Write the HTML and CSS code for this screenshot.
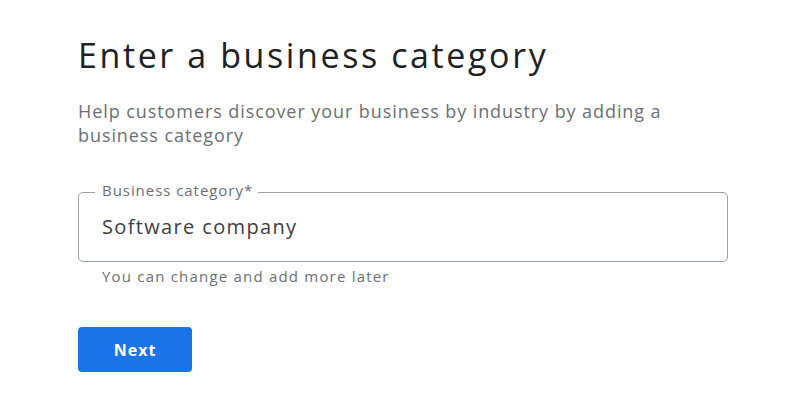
FILE: index.html
```html
<!DOCTYPE html>
<html lang="en">
<head>
<meta charset="utf-8">
<title>Enter a business category</title>
<link rel="stylesheet" href="styles.css">
</head>
<body>
<main class="page">
  <h1 class="title">Enter a business category</h1>
  <p class="intro">Help customers discover your business by industry by adding a business category</p>
  <fieldset class="field">
    <legend class="field-label">Business category*</legend>
    <div class="field-value">Software company</div>
  </fieldset>
  <p class="helper">You can change and add more later</p>
  <button class="btn-next" type="button">Next</button>
</main>
</body>
</html>
```
FILE: styles.css
```css
html, body {
  margin: 0;
  padding: 0;
  background: #ffffff;
}

body {
  font-family: "Open Sans", Roboto, "Liberation Sans", sans-serif;
  color: #202124;
}

.page {
  width: 650px;
  padding: 33px 0 0 78px;
  display: flex;
  flex-direction: column;
  align-items: flex-start;
}

.title {
  margin: 0;
  font-weight: 400;
  font-size: 34px;
  line-height: 44px;
  color: #202124;
  letter-spacing: 2.6px;
}

.intro {
  margin: 22px 0 0;
  width: 600px;
  font-size: 18px;
  line-height: 24px;
  color: #6b6f74;
  letter-spacing: 0.92px;
}

.field {
  margin: 35px 0 0;
  width: 650px;
  box-sizing: border-box;
  border: 1px solid #9aa0a6;
  border-radius: 5px;
  padding: 0 23px 22px 23px;
  min-width: 0;
}

.field-label {
  padding: 0 5px 4px 7px;
  margin-left: -7px;
  font-size: 15px;
  line-height: 16px;
  color: #6b6f74;
  letter-spacing: 0.95px;
}

.field-value {
  margin-top: 13px;
  font-size: 20px;
  line-height: 24px;
  color: #3c4043;
  letter-spacing: 1.35px;
}

.helper {
  margin: 4px 0 0 24px;
  font-size: 15px;
  line-height: 20px;
  color: #6b6f74;
  letter-spacing: 1.2px;
}

.btn-next {
  margin-top: 41px;
  width: 114px;
  height: 45px;
  padding: 0;
  border: none;
  border-radius: 4px;
  background: #1a73e8;
  color: #ffffff;
  font-family: "Open Sans", Roboto, sans-serif;
  font-weight: 700;
  font-size: 16px;
  letter-spacing: 1px;
  cursor: pointer;
}
```
